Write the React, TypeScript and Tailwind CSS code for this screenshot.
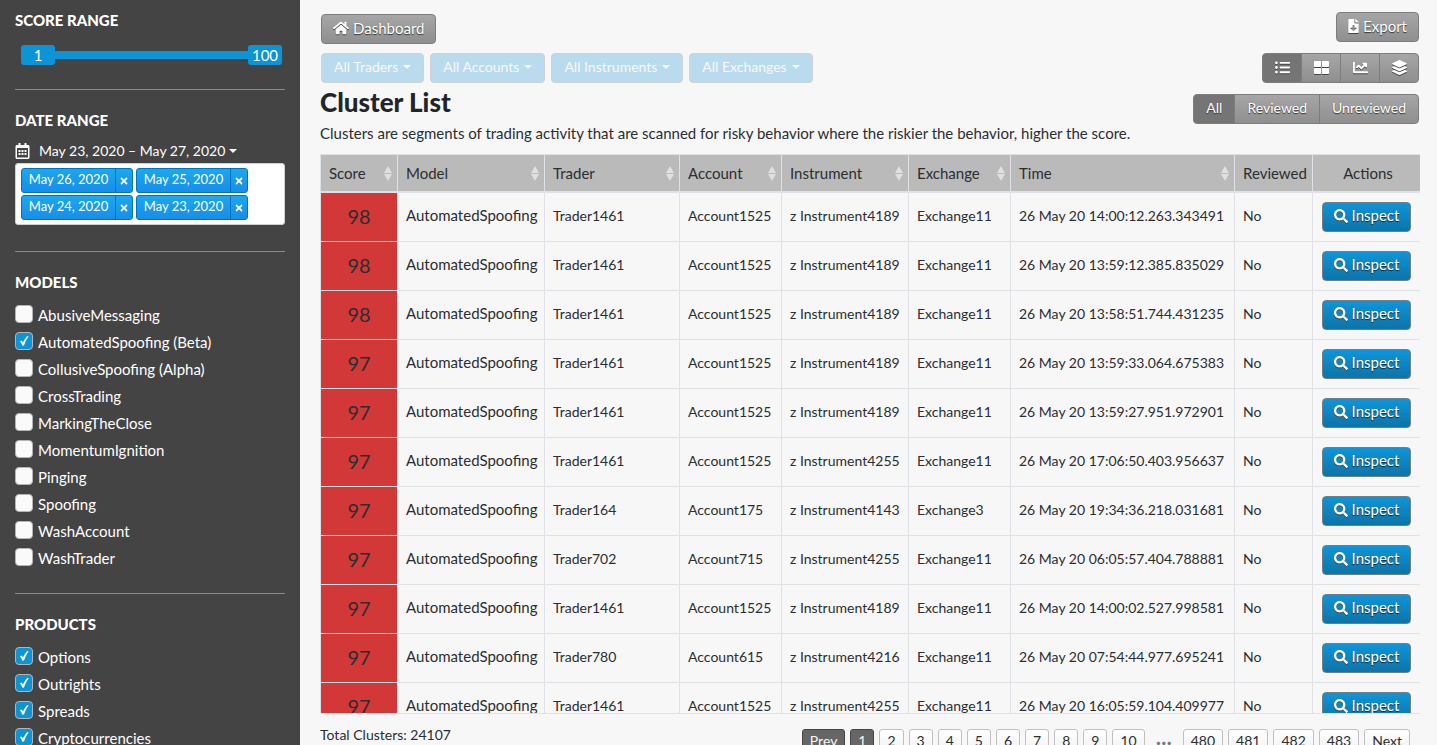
import { useState } from "react";
import type { ReactNode } from "react";
import {
  FaChartLine,
  FaFileDownload,
  FaHome,
  FaLayerGroup,
  FaListUl,
  FaRegCalendarAlt,
  FaSearch,
  FaThLarge,
  FaTimes,
} from "react-icons/fa";

const models = [
  "AbusiveMessaging",
  "AutomatedSpoofing (Beta)",
  "CollusiveSpoofing (Alpha)",
  "CrossTrading",
  "MarkingTheClose",
  "MomentumIgnition",
  "Pinging",
  "Spoofing",
  "WashAccount",
  "WashTrader",
];

const products = ["Options", "Outrights", "Spreads", "Cryptocurrencies"];

const dates = ["May 26, 2020", "May 25, 2020", "May 24, 2020", "May 23, 2020"];

const filters = ["All Traders", "All Accounts", "All Instruments", "All Exchanges"];

const columns = [
  { name: "Score", width: "w-[7%]", sortable: true },
  { name: "Model", width: "w-[147px]", sortable: true },
  { name: "Trader", width: "w-[135px]", sortable: true },
  { name: "Account", width: "w-[102px]", sortable: true },
  { name: "Instrument", width: "w-[127px]", sortable: true },
  { name: "Exchange", width: "w-[102px]", sortable: true },
  { name: "Time", width: "w-[224px]", sortable: true },
  { name: "Reviewed", width: "w-[78px]", sortable: false },
  { name: "Actions", width: "w-[108px]", sortable: false },
];

const clusters: [number, string, string, string, string, string][] = [
  [98, "Trader1461", "Account1525", "z Instrument4189", "Exchange11", "26 May 20 14:00:12.263.343491"],
  [98, "Trader1461", "Account1525", "z Instrument4189", "Exchange11", "26 May 20 13:59:12.385.835029"],
  [98, "Trader1461", "Account1525", "z Instrument4189", "Exchange11", "26 May 20 13:58:51.744.431235"],
  [97, "Trader1461", "Account1525", "z Instrument4189", "Exchange11", "26 May 20 13:59:33.064.675383"],
  [97, "Trader1461", "Account1525", "z Instrument4189", "Exchange11", "26 May 20 13:59:27.951.972901"],
  [97, "Trader1461", "Account1525", "z Instrument4255", "Exchange11", "26 May 20 17:06:50.403.956637"],
  [97, "Trader164", "Account175", "z Instrument4143", "Exchange3", "26 May 20 19:34:36.218.031681"],
  [97, "Trader702", "Account715", "z Instrument4255", "Exchange11", "26 May 20 06:05:57.404.788881"],
  [97, "Trader1461", "Account1525", "z Instrument4189", "Exchange11", "26 May 20 14:00:02.527.998581"],
  [97, "Trader780", "Account615", "z Instrument4216", "Exchange11", "26 May 20 07:54:44.977.695241"],
  [97, "Trader1461", "Account1525", "z Instrument4255", "Exchange11", "26 May 20 16:05:59.104.409977"],
];

const pages = ["Prev", "1", "2", "3", "4", "5", "6", "7", "8", "9", "10", "…", "480", "481", "482", "483", "Next"];

const buttonBase =
  "flex h-[30px] items-center justify-center gap-1 border border-[#7d7d7d] pb-0.5 text-white [text-shadow:0_1px_1px_#333]";

const grayFill = "bg-linear-to-b from-[#a6a6a6] to-[#8f8f8f]";

const activeFill = "bg-[#757575]";

const raisedIcon = "drop-shadow-[0_1px_0_#444]";

function Caret() {
  return (
    <svg viewBox="0 0 8 4" className="h-1 w-2 shrink-0 fill-current">
      <path d="M0 0 H8 L4 4 Z" />
    </svg>
  );
}

function SectionTitle({ children }: { children: ReactNode }) {
  return <h2 className="text-[15px] leading-6 font-black">{children}</h2>;
}

function CheckList({ items, initial }: { items: string[]; initial: string[] }) {
  const [checked, setChecked] = useState(initial);
  const toggle = (item: string) =>
    setChecked(checked.includes(item) ? checked.filter((c) => c !== item) : [...checked, item]);
  return (
    <div className="mt-[7px]">
      {items.map((item) => (
        <label key={item} className="flex h-[27px] items-start gap-[5px] pt-1">
          <span className="grid size-[18px] shrink-0 place-items-center">
            <input
              type="checkbox"
              checked={checked.includes(item)}
              onChange={() => toggle(item)}
              className="peer col-start-1 row-start-1 size-[18px] appearance-none rounded border border-[#b5b5b5] bg-[#fafafa] checked:bg-[#0d94d6]"
            />
            <svg
              viewBox="0 0 10 10"
              className="pointer-events-none col-start-1 row-start-1 hidden size-[10px] fill-white peer-checked:block"
            >
              <path d="M0.8 5.2 L2.6 4.4 L4 6.4 C5.2 4 6.6 1.6 8.6 0 L9.6 0.4 C7.6 3 6.2 6 5 9.4 L3.4 9.8 C2.8 7.8 2 6.4 0.8 5.2 Z" />
            </svg>
          </span>
          {item}
        </label>
      ))}
    </div>
  );
}

function Sidebar() {
  const [low, setLow] = useState(1);
  const [high, setHigh] = useState(100);
  return (
    <aside className="w-[300px] shrink-0 overflow-hidden bg-[#444] px-[15px] pt-2 text-white">
      <section>
        <SectionTitle>SCORE RANGE</SectionTitle>
        <div className="relative mt-[13px] mr-[3px] ml-1.5 flex h-5 items-center">
          <output className="grid h-5 w-[34px] place-items-center rounded-[3px] bg-[#0d94d6] leading-5">{low}</output>
          <div className="h-2 flex-1 bg-[#0d94d6]" />
          <output className="grid h-5 w-[34px] place-items-center rounded-[3px] bg-[#0d94d6] leading-5">{high}</output>
          <input
            type="range"
            aria-label="Lowest score"
            min={1}
            max={50}
            value={low}
            onChange={(e) => setLow(Number(e.target.value))}
            className="absolute inset-y-0 left-0 w-1/2 opacity-0"
          />
          <input
            type="range"
            aria-label="Highest score"
            min={51}
            max={100}
            value={high}
            onChange={(e) => setHigh(Number(e.target.value))}
            className="absolute inset-y-0 right-0 w-1/2 opacity-0"
          />
        </div>
      </section>
      <hr className="mt-6 mb-[18px] border-[#8a8a8a]" />
      <section>
        <SectionTitle>DATE RANGE</SectionTitle>
        <button type="button" className="mt-[7px] flex h-6 items-center gap-1 text-sm">
          <FaRegCalendarAlt className="mr-[5px] h-4 w-[15px]" />
          May 23, 2020 – May 27, 2020
          <Caret />
        </button>
        <div className="flex flex-wrap gap-x-[3px] gap-y-0.5 rounded-[3px] border border-[#d0d0d0] bg-white px-[5px] py-1">
          {dates.map((date) => (
            <span
              key={date}
              className="flex h-[25px] w-[112px] items-center rounded-[3px] border border-[#0073bb] bg-linear-to-b from-[#1da7ee] to-[#178ee9] text-[13px] leading-none"
            >
              <span className="flex-1 pb-0.5 text-center">{date}</span>
              <button
                type="button"
                aria-label={`Remove ${date}`}
                className="grid h-full w-[17px] place-items-center border-l border-[#0073bb]"
              >
                <FaTimes className="size-[10px]" />
              </button>
            </span>
          ))}
        </div>
      </section>
      <hr className="mt-[26px] mb-[18px] border-[#8a8a8a]" />
      <section>
        <SectionTitle>MODELS</SectionTitle>
        <CheckList items={models} initial={["AutomatedSpoofing (Beta)"]} />
      </section>
      <hr className="mt-[22px] mb-[18px] border-[#8a8a8a]" />
      <section>
        <SectionTitle>PRODUCTS</SectionTitle>
        <CheckList items={products} initial={products} />
      </section>
    </aside>
  );
}

function SortArrows() {
  return (
    <svg viewBox="0 0 8 15" className="h-[15px] w-2 shrink-0 fill-[#e0e0e0]">
      <path d="M4 0 L8 7 H0 Z M0 8 H8 L4 15 Z" />
    </svg>
  );
}

function Header() {
  const views = [
    { label: "List view", icon: FaListUl },
    { label: "Grid view", icon: FaThLarge },
    { label: "Chart view", icon: FaChartLine },
    { label: "Stacked view", icon: FaLayerGroup },
  ];
  return (
    <header className="flex justify-between">
      <div className="pt-[14px]">
        <a href="#dashboard" className={`${buttonBase} ${grayFill} ml-px w-fit rounded px-[11px]`}>
          <FaHome className={`size-4 ${raisedIcon}`} />
          Dashboard
        </a>
        <div className="mt-[9px] ml-px flex gap-1.5 text-sm">
          {filters.map((filter) => (
            <button
              key={filter}
              type="button"
              className="flex h-[30px] items-center gap-[5px] rounded border border-[#cfd2d4] bg-[#badaee] px-3 pb-0.5 text-[#f8f8f8]"
            >
              {filter}
              <Caret />
            </button>
          ))}
        </div>
        <h1 className="text-[26px] leading-[38px] font-black text-[#212529]">Cluster List</h1>
        <p className="leading-6">
          Clusters are segments of trading activity that are scanned for risky behavior where the riskier the behavior,
          higher the score.
        </p>
      </div>
      <div className="flex flex-col items-end gap-[11px] pt-3 pr-px">
        <button type="button" className={`${buttonBase} ${grayFill} rounded px-[11px]`}>
          <FaFileDownload className={`h-[14px] w-[11px] ${raisedIcon}`} />
          Export
        </button>
        <div className="flex">
          {views.map(({ label, icon: Icon }, i) => (
            <button
              key={label}
              type="button"
              aria-label={label}
              className={`${buttonBase} -ml-px w-10 first:rounded-l last:rounded-r ${i === 0 ? activeFill : grayFill}`}
            >
              <Icon className={`size-[15px] shrink-0 ${raisedIcon}`} />
            </button>
          ))}
        </div>
        <div className="flex text-sm">
          {["All", "Reviewed", "Unreviewed"].map((name, i) => (
            <button
              key={name}
              type="button"
              className={`${buttonBase} -ml-px px-3 first:rounded-l last:rounded-r ${i === 0 ? activeFill : grayFill}`}
            >
              {name}
            </button>
          ))}
        </div>
      </div>
    </header>
  );
}

function ClusterTable() {
  const cell = "border-b border-l border-[#dee2e6] px-2";
  const textCell = `${cell} pb-0.5`;
  return (
    <div className="mt-[9px] h-[calc(100vh-185px)] overflow-hidden border-b border-[#dee2e6]">
      <table className="w-full table-fixed border-separate border-spacing-0 whitespace-nowrap">
        <thead>
          <tr>
            {columns.map(({ name, width, sortable }) => (
              <th
                key={name}
                className={`${width} h-[39px] border-t border-b-2 border-l border-[#dee2e6] bg-[#bababa] pr-[5px] pl-2 text-left font-normal`}
              >
                {sortable ? (
                  <button type="button" className="flex w-full items-center justify-between">
                    {name}
                    <SortArrows />
                  </button>
                ) : (
                  <span className={name === "Actions" ? "block text-center" : ""}>{name}</span>
                )}
              </th>
            ))}
          </tr>
        </thead>
        <tbody className="text-sm">
          {clusters.map(([score, trader, account, instrument, exchange, time]) => (
            <tr key={time} className="h-[49px]">
              <td className={`${textCell} bg-[#d33838] text-center text-xl`}>{score}</td>
              <td className={`${textCell} text-[15px]`}>AutomatedSpoofing</td>
              <td className={textCell}>{trader}</td>
              <td className={textCell}>{account}</td>
              <td className={textCell}>{instrument}</td>
              <td className={textCell}>{exchange}</td>
              <td className={textCell}>{time}</td>
              <td className={textCell}>No</td>
              <td className={cell}>
                <button
                  type="button"
                  className="mx-auto flex h-[30px] w-[89px] items-center justify-center gap-1 rounded border border-[#6f7f88] bg-linear-to-b from-[#0f95d8] to-[#0c74a9] pb-0.5 text-[15px] text-white [text-shadow:0_1px_1px_#222]"
                >
                  <FaSearch className={`size-[14px] ${raisedIcon}`} />
                  Inspect
                </button>
              </td>
            </tr>
          ))}
        </tbody>
      </table>
    </div>
  );
}

function Footer() {
  return (
    <footer className="flex justify-between text-sm">
      <p className="pt-[9px] leading-6">Total Clusters: 24107</p>
      <nav aria-label="Pagination" className="flex gap-[5px] pt-[15px] pr-[10px]">
        {pages.map((page, i) =>
          page === "…" ? (
            <span key={page} className="w-[28px] text-center text-xl leading-4 font-black text-[#777]">
              {page}
            </span>
          ) : (
            <button
              key={page}
              type="button"
              className={`h-[26px] rounded-[3px] border px-[7px] pb-0.5 leading-5 ${
                i < 2
                  ? "border-[#444] bg-[#666] text-[#f7f7f7]"
                  : "border-[#c0c0c0] bg-linear-to-b from-white to-[#f0f0f0]"
              }`}
            >
              {page}
            </button>
          ),
        )}
      </nav>
    </footer>
  );
}

export default function App() {
  return (
    <div className="flex h-screen overflow-hidden bg-[#f7f7f7] font-['Lato','Liberation_Sans',sans-serif] text-[15px] leading-5 text-[#2b2e31]">
      <Sidebar />
      <main className="min-w-0 flex-1 overflow-hidden pr-[17px] pl-5">
        <Header />
        <ClusterTable />
        <Footer />
      </main>
    </div>
  );
}
